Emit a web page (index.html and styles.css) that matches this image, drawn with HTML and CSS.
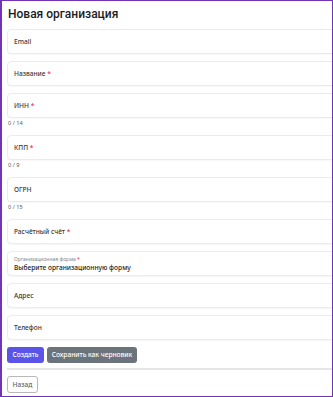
FILE: index.html
```html
<!DOCTYPE html>
<html lang="ru">
<head>
  <meta charset="UTF-8" />
  <meta name="viewport" content="width=device-width, initial-scale=1.0"/>
  <title>Новая организация</title>
  <link rel="stylesheet" href="styles.css">
</head>
<body>
  <div class="frame">
    <h1>Новая организация</h1>

    <form class="org-form">
      <div class="field"><label>Email</label></div>
      <div class="field"><label>Название <span class="req">*</span></label></div>

      <div class="field with-counter"><label>ИНН <span class="req">*</span></label></div>
      <div class="counter">0 / 14</div>

      <div class="field with-counter"><label>КПП <span class="req">*</span></label></div>
      <div class="counter">0 / 9</div>

      <div class="field with-counter"><label>ОГРН</label></div>
      <div class="counter">0 / 15</div>

      <div class="field"><label>Расчётный счёт <span class="req">*</span></label></div>

      <div class="field field-select">
        <span class="small-label">Организационная форма <span class="req">*</span></span>
        <span class="select-value">Выберите организационную форму</span>
      </div>

      <div class="field"><label>Адрес</label></div>
      <div class="field"><label>Телефон</label></div>

      <div class="actions">
        <button type="button" class="btn btn-primary">Создать</button>
        <button type="button" class="btn btn-secondary">Сохранить как черновик</button>
      </div>
    </form>

    <hr class="divider">

    <button type="button" class="btn btn-outline">Назад</button>
  </div>
</body>
</html>
```

FILE: styles.css
```css
html, body { margin: 0; padding: 0; background: #fff; }
body { font-family: "Noto Sans", "DejaVu Sans", sans-serif; color: #333; }

.frame {
  width: 333px; height: 397px; box-sizing: border-box;
  border: 1px solid #7432b4; border-left-width: 2px;
  padding: 0 0 0 5px; overflow: hidden;
}

h1 { font-family: Roboto, "Noto Sans", sans-serif; font-size: 12px; font-weight: 500; color: #1c1c1c; margin: 2px 0 0 1px; line-height: 22px; }

.org-form { width: 360px; margin-top: 4px; }

.field {
  height: 25px; box-sizing: border-box; margin-bottom: 7px;
  border: 1px solid #ebebeb; border-radius: 4px; background: #fff;
  box-shadow: 0 1px 1px rgba(0,0,0,0.03);
  display: flex; align-items: center; padding-left: 6px;
}
.field.with-counter { margin-bottom: 0; }
.field label { font-size: 6.6px; font-weight: 500; color: #3a3a3a; }
.req { color: #e0283c; }

.counter { font-size: 5.6px; color: #555; line-height: 10px; height: 10px; margin: 0 0 7px 1px; }

.field-select { flex-direction: column; align-items: flex-start; justify-content: center; padding-top: 1px; }
.small-label { font-size: 5px; color: #888; line-height: 7px; }
.select-value { font-size: 6.6px; font-weight: 500; color: #222; line-height: 9px; }

.actions { display: flex; gap: 3px; }

.btn {
  display: block; font-family: inherit; font-size: 6.6px; font-weight: 500; height: 16px;
  border: none; border-radius: 3px; cursor: pointer; line-height: 16px; padding: 0;
}
.btn-primary { background: #5a54e8; color: #fff; width: 37px; }
.btn-secondary { background: #6b737b; color: #fff; width: 90px; }
.btn-outline { background: #fff; color: #666; border: 1px solid #b8b8b8; width: 31px; height: 17px; line-height: 15px; }

.divider { border: 0; border-top: 2px solid #e6e6e6; margin: 5px -5px 6px 0; }
```
